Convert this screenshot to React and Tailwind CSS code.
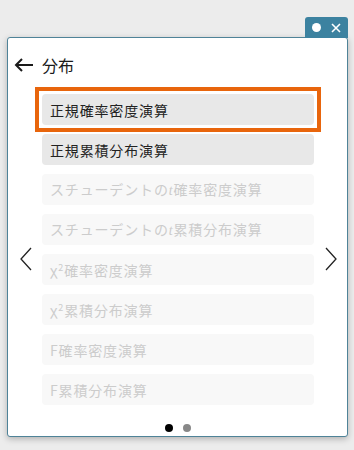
import React from 'react';

const items = [
  { label: '正規確率密度演算', active: true, selected: true },
  { label: '正規累積分布演算', active: true },
  { label: <>スチューデントの<i className="font-['Liberation_Serif',serif]">t</i>確率密度演算</> },
  { label: <>スチューデントの<i className="font-['Liberation_Serif',serif]">t</i>累積分布演算</> },
  { label: <>χ<sup className="text-[9px]">2</sup>確率密度演算</> },
  { label: <>χ<sup className="text-[9px]">2</sup>累積分布演算</> },
  { label: 'F確率密度演算' },
  { label: 'F累積分布演算' },
];

const Chevron = ({ dir }) => (
  <svg width="14" height="24" viewBox="0 0 14 24" fill="none" stroke="#222" strokeWidth="1.3">
    {dir === 'left' ? <path d="M12 1 L2 12 L12 23" /> : <path d="M2 1 L12 12 L2 23" />}
  </svg>
);

export default function App() {
  return (
    <div className="w-[354px] h-[450px] bg-[#ececec] pt-[37px] pl-[7px] font-['Noto_Sans_CJK_JP','Noto_Sans',sans-serif] overflow-hidden">
      <div className="relative w-[341px] h-[400px] bg-white border border-[#4f8398] rounded-[3px] shadow-[0_2px_6px_rgba(0,0,0,0.25)] flex flex-col">
        <div className="absolute -top-[21px] -right-px w-[43px] h-[21px] bg-[#3c82a0] rounded-t-[3px] flex items-center justify-between px-[7px]">
          <span className="w-[9px] h-[9px] rounded-full bg-white" />
          <svg width="10" height="10" viewBox="0 0 10 10" stroke="white" strokeWidth="1.6">
            <path d="M1 1 L9 9 M9 1 L1 9" />
          </svg>
        </div>

        <div className="flex items-center gap-[8px] pl-[6px] pt-[15px] h-[39px]">
          <svg width="20" height="14" viewBox="0 0 20 14" fill="none" stroke="#1a1a1a" strokeWidth="2">
            <path d="M19 7 H2 M8 1 L2 7 L8 13" />
          </svg>
          <span className="text-[16px] text-[#1a1a1a] leading-none">分布</span>
        </div>

        <div className="flex flex-1">
          <div className="w-[34px] flex items-center justify-center pt-[20px] pl-[2px]">
            <Chevron dir="left" />
          </div>
          <div className="w-[272px] flex flex-col gap-[9px] pt-[17px]">
            {items.map((it, i) => (
              <div
                key={i}
                className={`relative h-[31px] rounded-[4px] flex items-center pl-[8px] text-[14px] tracking-[0.06em] ${
                  it.active ? 'bg-[#e8e8e8] text-[#222]' : 'bg-[#f8f8f8] text-[#cccccc]'
                }`}
              >
                <span className="leading-none">{it.label}</span>
                {it.selected && (
                  <span className="absolute -inset-[7px] border-[4px] border-[#e8650c] pointer-events-none" />
                )}
              </div>
            ))}
          </div>
          <div className="w-[33px] flex items-center justify-center pt-[20px]">
            <Chevron dir="right" />
          </div>
        </div>

        <div className="flex justify-center gap-[10px] pb-[4px] pt-[4px]">
          <span className="w-[8px] h-[8px] rounded-full bg-black" />
          <span className="w-[8px] h-[8px] rounded-full bg-[#888]" />
        </div>
      </div>
    </div>
  );
}
